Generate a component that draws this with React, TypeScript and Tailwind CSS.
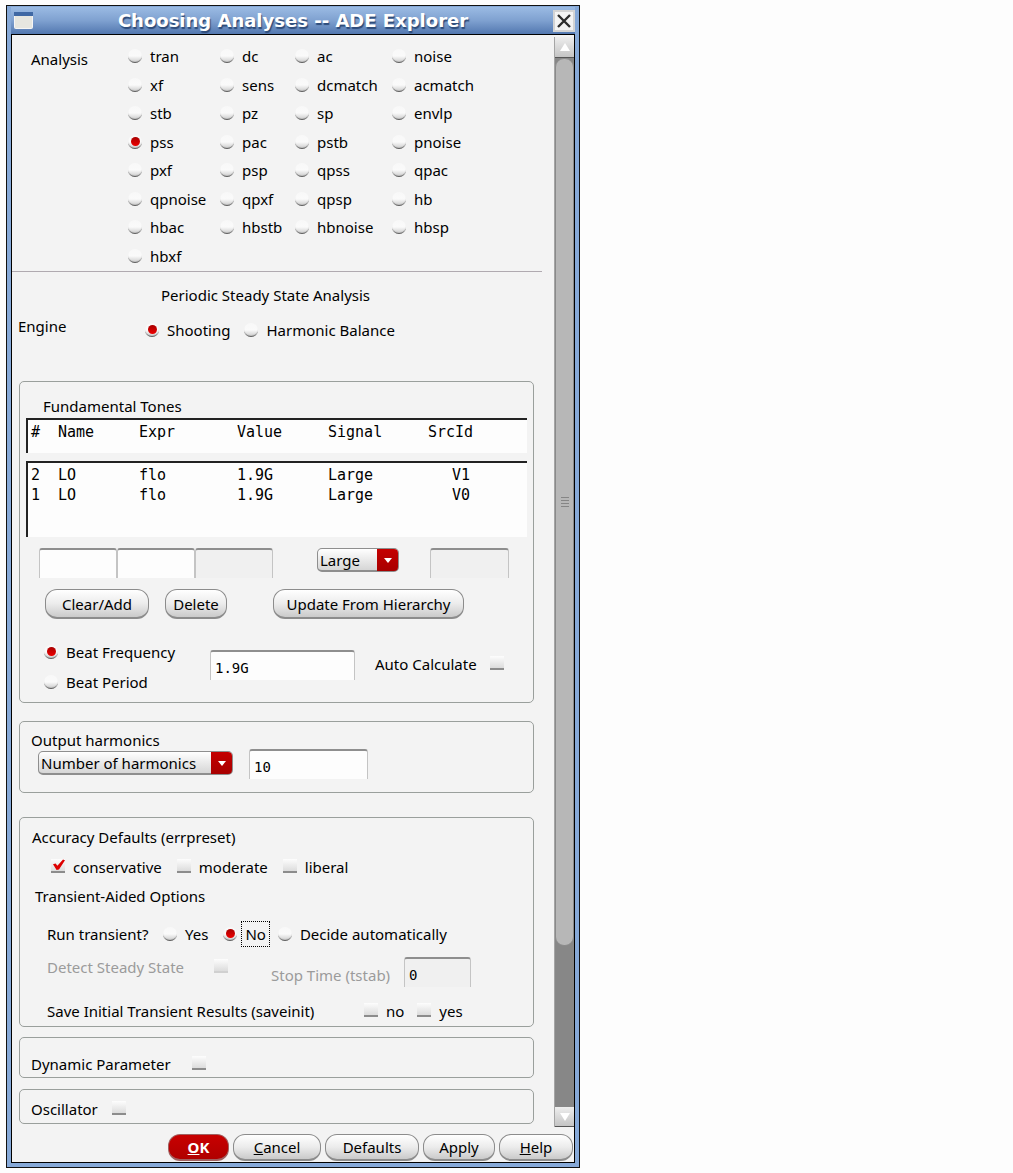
import React, { useState } from 'react';
import clsx from 'clsx';

const ANALYSES = [
  ['tran', 'dc', 'ac', 'noise'],
  ['xf', 'sens', 'dcmatch', 'acmatch'],
  ['stb', 'pz', 'sp', 'envlp'],
  ['pss', 'pac', 'pstb', 'pnoise'],
  ['pxf', 'psp', 'qpss', 'qpac'],
  ['qpnoise', 'qpxf', 'qpsp', 'hb'],
  ['hbac', 'hbstb', 'hbnoise', 'hbsp'],
  ['hbxf'],
];

const TONES = [
  { num: 2, name: 'LO', expr: 'flo', value: '1.9G', signal: 'Large', srcId: 'V1' },
  { num: 1, name: 'LO', expr: 'flo', value: '1.9G', signal: 'Large', srcId: 'V0' },
];

const TONE_COLS = 'grid grid-cols-[27px_81px_98px_91px_100px_1fr]';
const MONO = "font-['DejaVu_Sans_Mono',monospace]";

interface RadioProps {
  name: string;
  label: string;
  checked: boolean;
  onSelect: (value: string) => void;
  focused?: boolean;
  className?: string;
}

function Radio({ name, label, checked, onSelect, focused, className }: RadioProps) {
  return (
    <label className={clsx('flex items-center whitespace-nowrap', focused ? 'gap-1' : 'gap-2', className)}>
      <span className="relative block h-[14px] w-[14px] shrink-0">
        <input
          type="radio"
          name={name}
          checked={checked}
          onChange={() => onSelect(label)}
          className="peer block h-full w-full appearance-none rounded-full bg-linear-to-b from-[#f8f8f8] via-[#fafafa] to-[#c8c8c8] shadow-[inset_0_-2px_1px_-1px_#555555] outline-none"
        />
        <span className="pointer-events-none absolute top-[2px] left-[3px] hidden h-[9px] w-[9px] rounded-full bg-linear-to-b from-[#a80000] to-[#ee0000] peer-checked:block" />
      </span>
      <span className={clsx(focused && 'border border-dotted border-black px-[3px] py-[2px]')}>{label}</span>
    </label>
  );
}

interface CheckProps {
  label: string;
  checked?: boolean;
  disabled?: boolean;
  labelFirst?: boolean;
  className?: string;
}

function Check({ label, checked = false, disabled, labelFirst, className }: CheckProps) {
  const [on, setOn] = useState(checked);
  return (
    <label
      className={clsx(
        'flex items-center whitespace-nowrap',
        labelFirst ? 'flex-row-reverse justify-end' : 'gap-2',
        disabled && 'text-[#9b9b9b]',
        className,
      )}
    >
      <span className="relative mb-[2px] block h-[14px] w-[14px] shrink-0">
        <input
          type="checkbox"
          checked={on}
          disabled={disabled}
          onChange={() => setOn(!on)}
          className="peer block h-full w-full appearance-none border-b-2 border-[#8c8c8c] bg-linear-to-b from-[#fdfdfd] to-[#dcdcdc] disabled:border-[#d0d0d0]"
        />
        <svg viewBox="0 0 14 14" className="pointer-events-none absolute inset-0 hidden h-[14px] w-[14px] peer-checked:block">
          <path d="M2 5.2L4.6 4.4L6.4 6.8L12 0.5L14 1.2L8 10.4L5.6 11Z" fill="#dd0000" />
        </svg>
      </span>
      <span className={clsx(labelFirst && 'grow')}>{label}</span>
    </label>
  );
}

function Field({ label, value = '', disabled, className }: { label: string; value?: string; disabled?: boolean; className?: string }) {
  return (
    <input
      type="text"
      aria-label={label}
      defaultValue={value}
      disabled={disabled}
      className={clsx(
        'h-[30px] rounded-t-[3px] border border-t-2 border-b-0 border-[#c4c4c4] border-t-[#8e8e8e] px-1 pt-[3px] text-[14px] text-black outline-none',
        MONO,
        disabled ? 'bg-[#f0f0f0]' : 'bg-[#fdfdfd]',
        className,
      )}
    />
  );
}

function Dropdown({ label, options, className }: { label: string; options: string[]; className?: string }) {
  return (
    <span className={clsx('relative block h-6', className)}>
      <select
        aria-label={label}
        className="block h-full w-full appearance-none rounded-[5px] border border-b-2 border-[#8e8e8e] bg-linear-to-b from-white to-[#d6d6d6] pl-[2px] leading-5 outline-none"
      >
        {options.map((o) => (
          <option key={o}>{o}</option>
        ))}
      </select>
      <span className="pointer-events-none absolute top-px right-px bottom-px flex w-[21px] items-center justify-center rounded-r-[4px] bg-linear-to-b from-[#c40000] to-[#a80000]">
        <svg viewBox="0 0 8 5" className="h-[5px] w-2">
          <path d="M0 0H8L4 5Z" fill="#ffffff" />
        </svg>
      </span>
    </span>
  );
}

function PushButton({ children, primary, className }: { children: React.ReactNode; primary?: boolean; className?: string }) {
  return (
    <button
      type="button"
      className={clsx(
        'flex items-center justify-center border border-b-2 whitespace-nowrap',
        primary
          ? 'border-[#a06060] bg-linear-to-b from-[#c80000] to-[#b00000] font-bold text-white'
          : 'border-[#8c8c8c] bg-linear-to-b from-white via-[#ececec] to-[#cacaca] text-black',
        className,
      )}
    >
      {children}
    </button>
  );
}

function Group({ children, className }: { children: React.ReactNode; className?: string }) {
  return <section className={clsx('mr-5 ml-[7px] rounded-[5px] border border-[#9a9f9c]', className)}>{children}</section>;
}

function TonesTable() {
  return (
    <table className={clsx('mx-[6px] block text-[15px] leading-5', MONO)}>
      <thead className="block h-[35px] border-t-[2px] border-l-[2px] border-[#222222] bg-[#fdfdfd] pt-[2px] pl-[3px]">
        <tr className={clsx(TONE_COLS, 'text-left')}>
          {['#', 'Name', 'Expr', 'Value', 'Signal', 'SrcId'].map((h) => (
            <th key={h} className="font-normal">{h}</th>
          ))}
        </tr>
      </thead>
      <tbody className="mt-2 block h-[76px] border-t-[2px] border-l-[2px] border-[#222222] bg-[#fdfdfd] pt-[2px] pl-[3px]">
        {TONES.map((t) => (
          <tr key={t.num} className={TONE_COLS}>
            <td>{t.num}</td>
            <td>{t.name}</td>
            <td>{t.expr}</td>
            <td>{t.value}</td>
            <td>{t.signal}</td>
            <td className="pl-6">{t.srcId}</td>
          </tr>
        ))}
      </tbody>
    </table>
  );
}

function ScrollBar() {
  return (
    <div className="flex w-5 shrink-0 flex-col border-l border-[#a5a5a5] bg-[#878787]">
      <button type="button" aria-label="Scroll up" className="flex h-[21px] items-center justify-center border-b border-[#555555] bg-linear-to-b from-[#eeeeee] to-[#c4c4c4]">
        <svg viewBox="0 0 10 8" className="h-2 w-[10px]">
          <path d="M5 0L10 8H0Z" fill="#ffffff" />
        </svg>
      </button>
      <div className="flex-1">
        <div className="flex h-11/13 flex-col items-center justify-center gap-[2px] rounded-[9px] border border-[#8a8a8a] bg-[#b7b7b7]">
          {[0, 1, 2, 3].map((i) => (
            <span key={i} className="h-px w-2 bg-[#858585]" />
          ))}
        </div>
      </div>
      <button type="button" aria-label="Scroll down" className="flex h-5 items-center justify-center border-b border-[#555555] bg-linear-to-b from-[#eeeeee] to-[#c4c4c4]">
        <svg viewBox="0 0 10 8" className="h-2 w-[10px]">
          <path d="M0 0H10L5 8Z" fill="#ffffff" />
        </svg>
      </button>
    </div>
  );
}

function TitleBar() {
  return (
    <header className="flex h-[27px] items-center bg-linear-to-b from-[#9bbbe4] via-[#7fa1d0] to-[#5378b0] pl-[3px]">
      <svg viewBox="0 0 19 17" className="h-[17px] w-[19px]">
        <rect x="0.5" y="0.5" width="18" height="16" rx="1" fill="#e6e6e0" stroke="#f5f5f5" />
        <rect x="0" y="0" width="19" height="4" fill="#3f68a4" />
      </svg>
      <h1 className="flex-1 text-center font-['DejaVu_Sans',sans-serif] text-[18px] font-bold text-white [text-shadow:1px_2px_1px_#2c4a78]">
        Choosing Analyses -- ADE Explorer
      </h1>
      <button type="button" aria-label="Close" className="flex h-[22px] w-[22px] items-center justify-center border-2 border-[#d4d4d4] bg-[#f4f4f4]">
        <svg viewBox="0 0 16 16" className="h-4 w-4 shrink-0">
          <path d="M2 2L14 14M14 2L2 14" stroke="#2e2e2e" strokeWidth="2.4" />
        </svg>
      </button>
    </header>
  );
}

export default function App() {
  const [analysis, setAnalysis] = useState('pss');
  const [engine, setEngine] = useState('Shooting');
  const [beat, setBeat] = useState('Beat Frequency');
  const [runTransient, setRunTransient] = useState('No');

  return (
    <main className="min-h-screen bg-[#fdfdfd] pt-[5px] pl-[6px] font-['Noto_Sans',sans-serif] text-[15px] leading-5 text-black">
      <div className="w-full max-w-[574px] border border-[#111111] bg-[#86a9d8] px-[4px] pt-px pb-1">
        <TitleBar />
        <form className="border border-black bg-[#f3f3f3]">
          <div className="flex pt-[2px]">
            <div className="min-w-0 flex-1">
              <div className="mr-3 flex border-b border-[#b0aab0] pt-[5px] pb-px">
                <span className="w-[116px] pt-[7px] pl-[19px]">Analysis</span>
                <div className="grid h-[228px] flex-1 grid-cols-[92px_75px_97px_1fr] grid-rows-8 items-center">
                  {ANALYSES.flat().map((a) => (
                    <Radio key={a} name="analysis" label={a} checked={analysis === a} onSelect={setAnalysis} />
                  ))}
                </div>
              </div>

              <h2 className="mt-[13px] pl-[149px]">Periodic Steady State Analysis</h2>
              <div className="mt-[11px] flex pl-[6px]">
                <span className="w-[127px]">Engine</span>
                <div className="flex gap-[14px] pt-1">
                  <Radio name="engine" label="Shooting" checked={engine === 'Shooting'} onSelect={setEngine} />
                  <Radio name="engine" label="Harmonic Balance" checked={engine === 'Harmonic Balance'} onSelect={setEngine} />
                </div>
              </div>

              <Group className="mt-[41px] pb-[10px]">
                <h3 className="pt-[14px] pb-[2px] pl-[23px]">Fundamental Tones</h3>
                <TonesTable />
                <div className="mt-[11px] flex items-start pl-[19px]">
                  <Field label="Name" className="w-[78px]" />
                  <Field label="Expr" className="w-[78px]" />
                  <Field label="Value" disabled className="w-[78px]" />
                  <Dropdown label="Signal" options={['Large', 'Moderate']} className="ml-11 w-[82px]" />
                  <Field label="SrcId" disabled className="ml-[31px] w-[79px]" />
                </div>
                <div className="mt-[11px] flex pl-[25px]">
                  <PushButton className="h-[30px] w-[104px] rounded-xl">Clear/Add</PushButton>
                  <PushButton className="ml-4 h-[30px] w-[62px] rounded-xl">Delete</PushButton>
                  <PushButton className="ml-[46px] h-[30px] w-[191px] rounded-xl">Update From Hierarchy</PushButton>
                </div>
                <div className="mt-[23px] flex items-start pl-6">
                  <div className="flex w-[166px] flex-col gap-[10px]">
                    <Radio name="beat" label="Beat Frequency" checked={beat === 'Beat Frequency'} onSelect={setBeat} />
                    <Radio name="beat" label="Beat Period" checked={beat === 'Beat Period'} onSelect={setBeat} />
                  </div>
                  <Field label="Beat value" value="1.9G" className="mt-2 w-[145px]" />
                  <Check label="Auto Calculate" labelFirst className="mt-3 ml-5 w-[129px]" />
                </div>
              </Group>

              <Group className="mt-[18px] pb-[13px]">
                <div className="pt-2 pl-[11px]">Output harmonics</div>
                <div className="-mt-px flex items-start pl-[18px]">
                  <Dropdown label="Output harmonics" options={['Number of harmonics', 'Select from range']} className="mt-[2px] w-[195px]" />
                  <Field label="Harmonics count" value="10" className="ml-4 w-[119px]" />
                </div>
              </Group>

              <Group className="mt-6 pb-[5px]">
                <h3 className="pt-[9px] pl-3">Accuracy Defaults (errpreset)</h3>
                <div className="mt-[10px] flex gap-[15px] pl-[31px]">
                  <Check label="conservative" checked />
                  <Check label="moderate" />
                  <Check label="liberal" />
                </div>
                <h3 className="mt-[9px] pl-[15px]">Transient-Aided Options</h3>
                <div className="mt-[15px] flex items-center pl-[27px]">
                  <span className="w-[116px]">Run transient?</span>
                  <Radio name="run" label="Yes" checked={runTransient === 'Yes'} onSelect={setRunTransient} />
                  <Radio name="run" label="No" focused checked={runTransient === 'No'} onSelect={setRunTransient} className="ml-[15px]" />
                  <Radio name="run" label="Decide automatically" checked={runTransient === 'Decide automatically'} onSelect={setRunTransient} className="ml-2" />
                </div>
                <div className="mt-[10px] flex items-start pl-[27px]">
                  <Check label="Detect Steady State" labelFirst disabled className="mr-[43px] w-[181px]" />
                  <span className="mt-2 w-[133px] text-[#9b9b9b]">Stop Time (tstab)</span>
                  <Field label="Stop Time (tstab)" value="0" disabled className="w-[67px]" />
                </div>
                <div className="mt-[14px] flex pl-[27px]">
                  <span className="w-[317px]">Save Initial Transient Results (saveinit)</span>
                  <Check label="no" />
                  <Check label="yes" className="ml-[13px]" />
                </div>
              </Group>

              <Group className="mt-[10px] pt-4 pb-[3px] pl-[11px]">
                <Check label="Dynamic Parameter" labelFirst className="w-[175px]" />
              </Group>
              <Group className="mt-[11px] pt-[9px] pb-1 pl-[11px]">
                <Check label="Oscillator" labelFirst className="w-[95px]" />
              </Group>
              <div className="h-[3px]" />
            </div>
            <ScrollBar />
          </div>

          <footer className="flex justify-end gap-1 pt-[7px] pr-px pb-px">
            <PushButton primary className="h-[27px] w-[61px] rounded-xl"><u>O</u>K</PushButton>
            <PushButton className="h-[27px] w-[88px] rounded-xl"><u>C</u>ancel</PushButton>
            <PushButton className="h-[27px] w-[94px] rounded-xl">Defaults</PushButton>
            <PushButton className="h-[27px] w-[72px] rounded-xl">Apply</PushButton>
            <PushButton className="h-[27px] w-[74px] rounded-xl"><u>H</u>elp</PushButton>
          </footer>
        </form>
      </div>
    </main>
  );
}
